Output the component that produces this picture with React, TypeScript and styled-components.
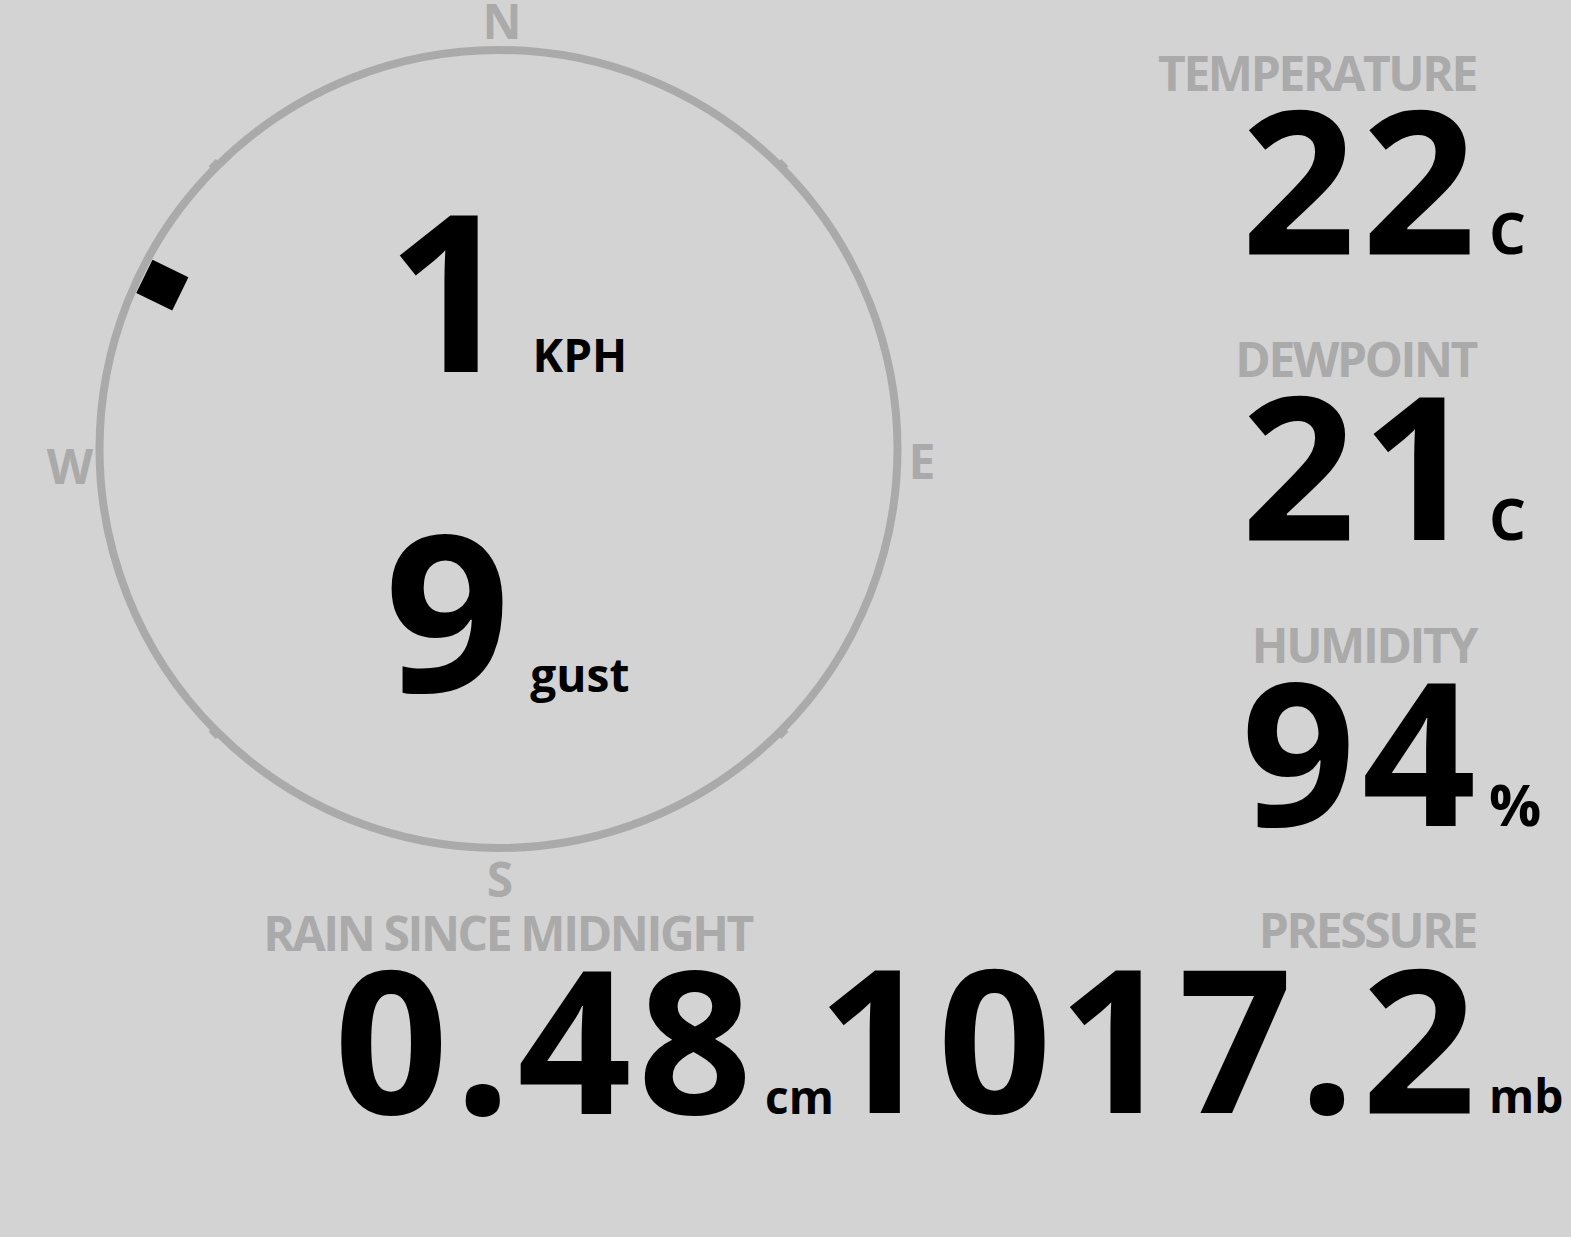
import styled, { createGlobalStyle } from "styled-components";

const GlobalStyle = createGlobalStyle`
  html, body {
    margin: 0;
    padding: 0;
    background: #d3d3d3;
  }
  body {
    font-family: "Open Sans", "Noto Sans", sans-serif;
    font-weight: 700;
  }
`;

const Page = styled.div`
  width: 1571px;
  height: 1237px;
  display: flex;
  flex-direction: column;
  overflow: hidden;
`;

const TopRow = styled.div`
  display: flex;
  height: 904px;
`;

const Compass = styled.div`
  position: relative;
  flex: 0 0 1000px;
  height: 904px;
`;

const Dial = styled.svg`
  position: absolute;
  inset: 0;
`;

type PointProps = {
  x: number;
  y: number;
};

const Point = styled.span<PointProps>`
  position: absolute;
  left: ${({ x }) => x}px;
  top: ${({ y }) => y}px;
  transform: translateX(-50%);
  font-size: 48px;
  line-height: 42px;
  color: #aaaaaa;
`;

const Speeds = styled.div`
  position: relative;
  display: flex;
  flex-direction: column;
  align-items: center;
  gap: 100px;
  padding-top: 177px;
  padding-left: 14px;
`;

const SpeedRow = styled.div`
  display: flex;
  align-items: baseline;
  gap: 16px;
`;

const SpeedValue = styled.span`
  font-size: 220px;
  line-height: 220px;
  letter-spacing: 4px;
  color: #000;
`;

const SpeedUnit = styled.span`
  font-size: 46px;
  color: #000;
`;

const Stats = styled.div`
  flex: 1;
  display: flex;
  flex-direction: column;
  align-items: flex-end;
  gap: 74px;
  padding-top: 49px;
`;

type ReadingProps = {
  unitWidth: number;
};

const Reading = styled.div<ReadingProps>`
  display: grid;
  grid-template-columns: auto ${({ unitWidth }) => unitWidth}px;
  column-gap: 13px;
  row-gap: 5px;
  align-items: baseline;
`;

const Label = styled.div`
  grid-column: 1;
  justify-self: end;
  font-size: 48px;
  line-height: 48px;
  letter-spacing: -2.4px;
  color: #aaaaaa;
  white-space: nowrap;
`;

const Value = styled.div`
  grid-column: 1;
  justify-self: end;
  margin-right: -6px;
  font-size: 200px;
  line-height: 150px;
  letter-spacing: 6px;
  color: #000;
  white-space: nowrap;
`;

type UnitProps = {
  big?: boolean;
};

const Unit = styled.div<UnitProps>`
  grid-column: 2;
  font-size: ${({ big }) => (big ? "58px" : "46px")};
  line-height: 1;
  color: #000;
  white-space: nowrap;
`;

const BottomRow = styled.div`
  display: flex;
  padding-top: 2px;
`;

const RainSlot = styled.div`
  flex: 0 0 800px;
  display: flex;
  justify-content: flex-end;
  padding-top: 3px;
`;

const PressureSlot = styled.div`
  flex: 1;
  display: flex;
  justify-content: flex-end;
`;

const CX = 498.5;
const CY = 449;
const R = 399;
const WIND_DIR = 296;

function Stat({
  label,
  value,
  unit,
  big,
  unitWidth = 82,
}: {
  label: string;
  value: string;
  unit: string;
  big?: boolean;
  unitWidth?: number;
}) {
  return (
    <Reading unitWidth={unitWidth}>
      <Label>{label}</Label>
      <Value>{value}</Value>
      <Unit big={big}>{unit}</Unit>
    </Reading>
  );
}

export default function App() {
  return (
    <Page>
      <GlobalStyle />
      <TopRow>
        <Compass>
          <Dial width={1000} height={904} viewBox="0 0 1000 904">
            <circle cx={CX} cy={CY} r={R} fill="none" stroke="#aaaaaa" strokeWidth={8} />
            {[45, 135, 225, 315].map((a) => (
              <g key={a} transform={`translate(${CX},${CY}) rotate(${a})`}>
                <rect x={-5} y={-R - 6} width={10} height={5} fill="#aaaaaa" />
              </g>
            ))}
            <g transform={`translate(${CX},${CY}) rotate(${WIND_DIR})`}>
              <rect x={-18.5} y={-394} width={37} height={40} fill="#000" />
            </g>
          </Dial>
          <Point x={502} y={0}>N</Point>
          <Point x={922} y={440}>E</Point>
          <Point x={500} y={858}>S</Point>
          <Point x={70} y={445}>W</Point>
          <Speeds>
            <SpeedRow>
              <SpeedValue>1</SpeedValue>
              <SpeedUnit>KPH</SpeedUnit>
            </SpeedRow>
            <SpeedRow>
              <SpeedValue>9</SpeedValue>
              <SpeedUnit>gust</SpeedUnit>
            </SpeedRow>
          </Speeds>
        </Compass>
        <Stats>
          <Stat label="TEMPERATURE" value="22" unit="C" big />
          <Stat label="DEWPOINT" value="21" unit="C" big />
          <Stat label="HUMIDITY" value="94" unit="%" big />
        </Stats>
      </TopRow>
      <BottomRow>
        <RainSlot>
          <Stat label="RAIN SINCE MIDNIGHT" value="0.48" unit="cm" unitWidth={35} />
        </RainSlot>
        <PressureSlot>
          <Stat label="PRESSURE" value="1017.2" unit="mb" />
        </PressureSlot>
      </BottomRow>
    </Page>
  );
}
